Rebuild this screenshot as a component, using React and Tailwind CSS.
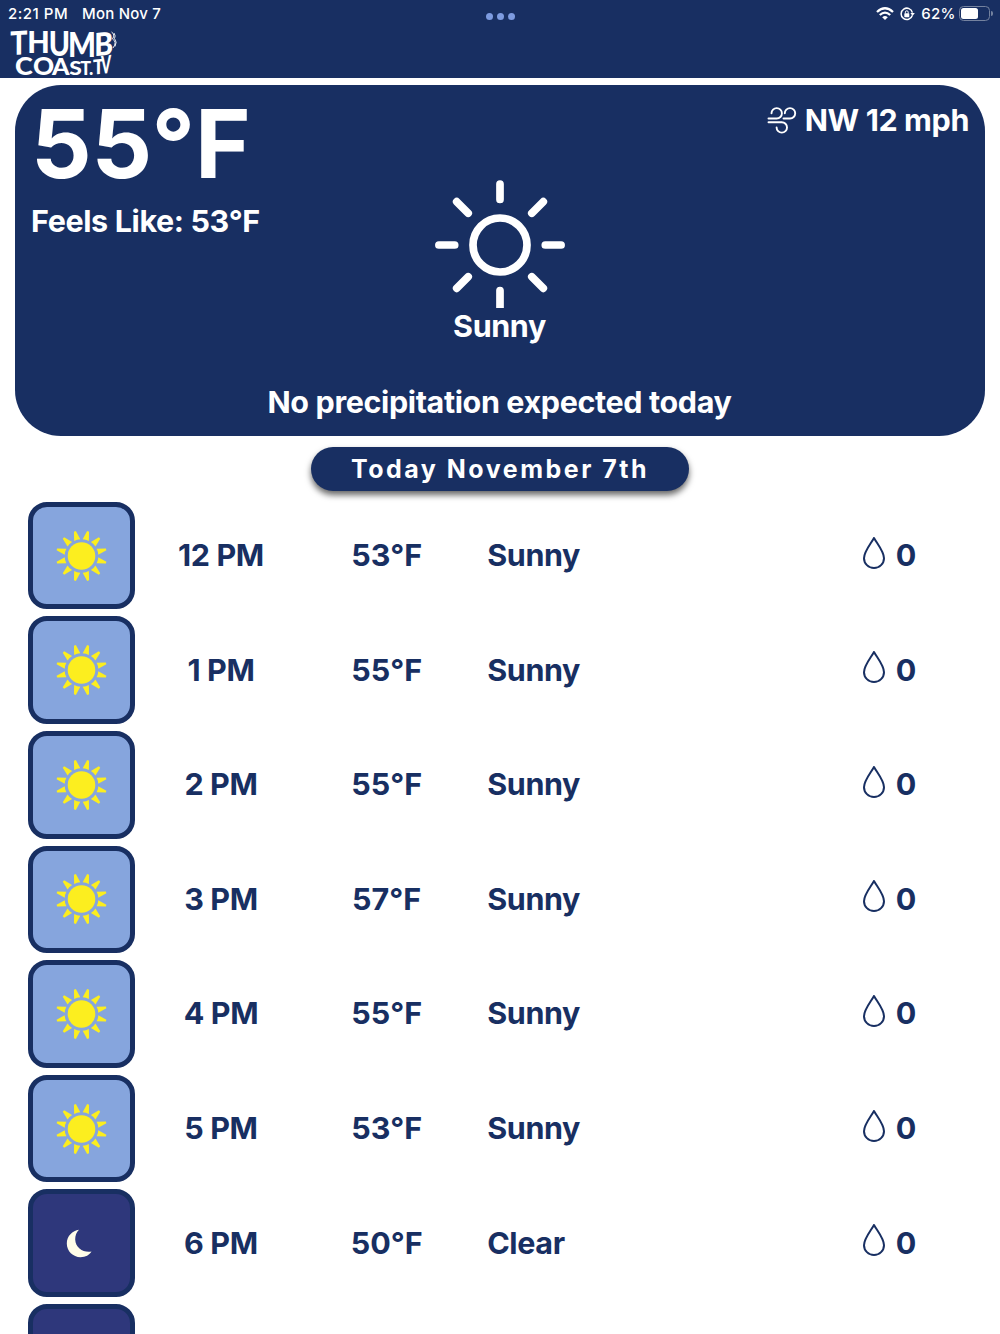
const hours = [
  { time: "12 PM", temp: "53°F", sky: "Sunny", rain: 0 },
  { time: "1 PM", temp: "55°F", sky: "Sunny", rain: 0 },
  { time: "2 PM", temp: "55°F", sky: "Sunny", rain: 0 },
  { time: "3 PM", temp: "57°F", sky: "Sunny", rain: 0 },
  { time: "4 PM", temp: "55°F", sky: "Sunny", rain: 0 },
  { time: "5 PM", temp: "53°F", sky: "Sunny", rain: 0 },
  { time: "6 PM", temp: "50°F", sky: "Clear", rain: 0 },
];

// letter, x, baseline, x scale, y scale, skewY
const logoLetters = [
  ["T", 10.3, 55, 0.95, 1.08, -3],
  ["H", 27.3, 53, 0.97, 1.03, 0],
  ["U", 48.7, 55.5, 0.95, 1.14, 0],
  ["M", 68, 57.3, 0.98, 1.17, 0],
  ["B", 94.3, 56.3, 0.95, 1.06, -5],
  ["C", 15, 74.9, 0.9, 0.85, 0],
  ["O", 33, 74.9, 0.87, 0.83, 0],
  ["A", 52, 74.9, 0.83, 0.77, 0],
  ["S", 69.3, 74.9, 0.76, 0.62, 0],
  ["T", 80.5, 74.9, 0.58, 0.6, 0],
  [".", 89, 74.9, 0.6, 0.6, 0],
  ["T", 93, 74.5, 0.6, 0.68, -5],
  ["V", 101, 74, 0.48, 0.83, -6],
];

function Logo() {
  return (
    <svg
      className="overflow-visible font-['Lato',sans-serif]"
      width="120"
      height="50"
      viewBox="0 28 120 50"
      fill="#fff"
      fontWeight="900"
      fontSize="30"
    >
      {logoLetters.map(([ch, x, y, sx, sy, skew], i) => (
        <text key={i} transform={`translate(${x} ${y}) skewY(${skew}) scale(${sx} ${sy})`}>
          {ch}
        </text>
      ))}
      <path
        d="M111.5 32q4 2.5 1 7q5 3 .5 9M114 33q2 3 .5 5.500q3 3.500 .5 8"
        fill="none"
        stroke="#fff"
        strokeWidth="0.9"
      />
    </svg>
  );
}

function StatusBar() {
  return (
    <div className="flex h-[28px] items-center px-[8px] pb-px text-[15px] font-medium text-white">
      <div className="flex flex-1 gap-[14px]">
        <span className="tracking-[0.5px]">2:21 PM</span>
        <span className="tracking-[0.2px]">Mon Nov 7</span>
      </div>
      <div className="flex gap-1 pt-[5px]">
        <span className="size-[7px] rounded-full bg-[#7d9be0]" />
        <span className="size-[7px] rounded-full bg-[#7d9be0]" />
        <span className="size-[7px] rounded-full bg-[#7d9be0]" />
      </div>
      <div className="-mr-px flex flex-1 items-center justify-end">
        {/* Wifi */}
        <svg width="18" height="14" viewBox="0 0 18 14" fill="none" stroke="#fff" strokeWidth="2.3">
          <path d="M1 5Q9 -2.5 17 5M3.8 8Q9 3.3 14.2 8" />
          <path d="M9 13L6.2 10.2Q9 7.9 11.8 10.2Z" fill="#fff" stroke="none" />
        </svg>
        {/* Rotation lock */}
        <svg className="mr-[6px] ml-[6px]" width="15" height="14" viewBox="0 0 15 14" fill="none" stroke="#fff">
          <path d="M12.3 8.5A5.7 5.7 0 1 1 12.4 5.6" strokeWidth="1.5" />
          <path d="M10.4 6h4.4l-2.2 3z" fill="#fff" stroke="none" />
          <rect x="4.3" y="6.3" width="5" height="3.9" rx="0.6" fill="#fff" stroke="none" />
          <path d="M5.4 6.5V5.2a1.4 1.4 0 0 1 2.8 0V6.5" strokeWidth="1" />
        </svg>
        <span className="tracking-[0.2px]">62%</span>
        {/* Battery */}
        <div className="ml-[3.5px] flex items-center">
          <div className="h-[15px] w-[31px] rounded-[4.5px] border border-[#74829f] p-[1px]">
            <div className="h-full w-[17px] rounded-[2.5px] bg-white" />
          </div>
          <div className="ml-[1px] h-[5px] w-[2px] rounded-r-full bg-[#74829f]" />
        </div>
      </div>
    </div>
  );
}

function WindIcon() {
  return (
    <svg width="30" height="28" viewBox="0 0 30 28" fill="none" stroke="#fff" strokeWidth="1.9" strokeLinecap="round">
      <path d="M1.5 12.5H9.7A5.2 5.2 0 1 0 4.5 7.3" />
      <path d="M16.5 12.5H23A5.2 5.2 0 1 0 17.8 7.3" />
      <path d="M1.5 16.2H14.8A5.2 5.2 0 1 1 9.6 21.4" />
    </svg>
  );
}

function SunOutline() {
  return (
    <svg width="132" height="129" viewBox="0 0 132 129" fill="none" stroke="#fff" strokeWidth="7.7" strokeLinecap="round">
      <circle cx="66" cy="66" r="27" />
      <path d="M66 5V20.5M66 111.5V135M4.9 66H20.7M111.3 66H127.1" />
      <path d="M22.7 22.7L34.2 34.2M97.8 97.8L109.3 109.3M22.7 109.3L34.2 97.8M97.8 34.2L109.3 22.7" />
    </svg>
  );
}

const rays = [15, 45, 75, 105, 135, 165, 195, 225, 255, 285, 315, 345];

function SunIcon() {
  return (
    <svg width="54" height="54" viewBox="-27.5 -27 54 54" fill="#fcee1f">
      <circle r="13.8" />
      {rays.map((angle) => (
        <path key={angle} d="M-3.2 -16.5L-1 -25.5H1L3.2 -16.5Q0 -17.3 -3.2 -16.5Z" transform={`rotate(${angle})`} />
      ))}
    </svg>
  );
}

function MoonIcon() {
  return (
    <svg width="54" height="54" viewBox="-27 -27.5 54 54" fill="#fffde8">
      <path d="M-2 -13.8C-8.5 -13 -14.2 -7.5 -14.2 0C-14.2 7.5 -8 13.7 -0.5 13.7C4.5 13.7 8.5 11.5 10.5 8C3 9.5 -5.5 5 -5.8 -4C-5.9 -8 -4.5 -11.5 -2 -13.8Z" />
    </svg>
  );
}

function DropIcon() {
  return (
    <svg width="24" height="34" viewBox="0 0 24 34" fill="none" stroke="#182f62" strokeWidth="2" strokeLinejoin="round">
      <path d="M12 2C9 7.5 2 15.5 2 22.2A10 9.8 0 0 0 22 22.2C22 15.5 15 7.5 12 2Z" />
    </svg>
  );
}

function HourRow({ hour }) {
  const night = hour.sky === "Clear";
  return (
    <div className="flex h-[107.6px] shrink-0 items-center">
      <div
        className={`flex size-[107.6px] items-center justify-center rounded-[19px] border-5 border-[#182f62] ${
          night ? "bg-[#2e377b]" : "bg-[#86a5dd]"
        }`}
      >
        {night ? <MoonIcon /> : <SunIcon />}
      </div>
      <div className="-mt-px w-[171.5px] text-center">{hour.time}</div>
      <div className="-mt-px w-[160px] text-center tracking-normal">{hour.temp}</div>
      <div className="-mt-px ml-[20.5px] flex-1">{hour.sky}</div>
      <div className="flex items-center gap-[10px]">
        <span className="-mt-[6px]">
          <DropIcon />
        </span>
        <span className="-mt-px">{hour.rain}</span>
      </div>
    </div>
  );
}

export default function App() {
  return (
    <div className="h-[1334px] overflow-hidden bg-white font-['Inter',sans-serif] text-[30.5px] leading-[40px] font-bold tracking-[-0.38px] text-[#182f62]">
      <header className="h-[78px] bg-[#182f62] font-normal tracking-normal">
        <StatusBar />
        <Logo />
      </header>

      {/* Current conditions */}
      <section className="mx-[15px] mt-[7px] flex h-[351px] flex-col rounded-[46px] bg-[#182f62] text-white">
        <div className="flex h-[94px] justify-between pr-[16px] pl-[15px]">
          <div>
            <div className="pt-[11px] pl-px text-[95px] leading-[96px] tracking-[-0.2px]">55°F</div>
            <div className="pt-[9px] pl-px">Feels Like: 53°F</div>
          </div>
          <div className="flex items-start gap-[8px] pt-[15px]">
            <span className="pt-[6px]">
              <WindIcon />
            </span>
            <span>NW 12 mph</span>
          </div>
        </div>
        <div className="flex flex-col items-center">
          <SunOutline />
          <div className="-mt-[2px] pr-px">Sunny</div>
          <div className="mt-[36px] pr-px">No precipitation expected today</div>
        </div>
      </section>

      {/* Day label */}
      <div className="mx-auto mt-[11px] flex h-[44px] w-[378px] items-center justify-center rounded-full bg-[#182f62] text-[25px] tracking-[2.5px] text-white shadow-[0_4px_6px_rgba(0,0,0,0.6)]">
        Today November 7th
      </div>

      {/* Hourly list */}
      <div className="mt-[10.8px] flex flex-col gap-[7px] pr-[84px] pl-[27.6px]">
        {hours.map((hour) => (
          <HourRow key={hour.time} hour={hour} />
        ))}
        <div className="size-[107.6px] shrink-0 rounded-[19px] border-5 border-[#182f62] bg-[#2e377b]" />
      </div>
    </div>
  );
}
